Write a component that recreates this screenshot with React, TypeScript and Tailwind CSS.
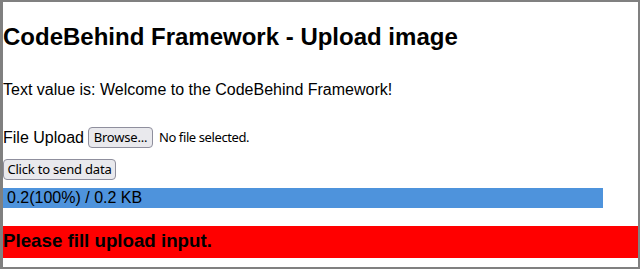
export default function App() {
  const ui = { fontFamily: '"Noto Sans", "Open Sans", sans-serif' };

  return (
    <div
      className="w-[640px] h-[269px] box-border border-[#808080] border-l-[3px] border-t-2 border-r-2 border-b-2 bg-white text-black overflow-hidden"
      style={{ fontFamily: '"Liberation Sans", Arial, sans-serif' }}
    >
      <div className="flex flex-col">
        <h2 className="mt-[21px] text-[24px] leading-[28px] font-bold">CodeBehind Framework - Upload image</h2>

        <p className="mt-[30px] text-[16px] leading-[18px]">Text value is: Welcome to the CodeBehind Framework!</p>

        <div className="mt-[28px] flex items-center h-[21px]">
          <span className="text-[16px] leading-[18px]">File Upload</span>
          <button
            className="ml-[4px] h-[21px] w-[65px] rounded-[4px] border border-[#8f8f9d] bg-[#e9e9ed] text-[13px] leading-[19px] tracking-[-0.2px]"
            style={ui}
          >
            Browse...
          </button>
          <span className="ml-[6px] text-[13px] leading-[19px] tracking-[-0.4px]" style={ui}>
            No file selected.
          </span>
        </div>

        <div className="mt-[11px] flex">
          <button
            className="h-[21px] w-[113px] rounded-[4px] border border-[#8f8f9d] bg-[#e9e9ed] text-[13px] leading-[19px] tracking-[-0.2px]"
            style={ui}
          >
            Click to send data
          </button>
        </div>

        <div className="mt-[8px] h-[20px] w-[600px] bg-[#4e93dc] pl-[4px] text-[16px] leading-[19px]">
          0.2(100%) / 0.2 KB
        </div>

        <div className="mt-[18px] h-[32px] bg-[#ff0000] pt-[4px] text-[18.72px] leading-[22px] font-bold">
          Please fill upload input.
        </div>
      </div>
    </div>
  );
}
